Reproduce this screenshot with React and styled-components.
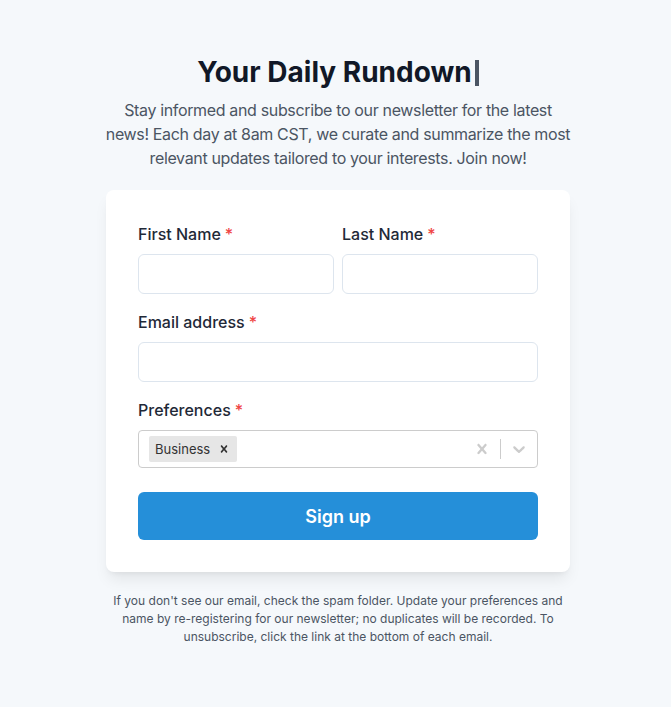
import React from "react";
import styled, { createGlobalStyle } from "styled-components";

const Global = createGlobalStyle`
  html, body { margin: 0; padding: 0; background: #f5f8fb; }
  body { font-family: Inter, "Noto Sans", sans-serif; -webkit-font-smoothing: antialiased; }
  * { box-sizing: border-box; }
`;

const Page = styled.div`
  min-height: 707px;
  display: flex;
  flex-direction: column;
  align-items: center;
  padding-top: 54px;
  padding-left: 5px;
`;

const Title = styled.h1`
  margin: 0;
  font-size: 28px;
  line-height: 36px;
  font-weight: 700;
  color: #111827;
  display: flex;
  align-items: center;
`;

const Cursor = styled.span`
  display: inline-block;
  width: 4px;
  height: 26px;
  margin-left: 3px;
  margin-top: 2px;
  background: #4b5563;
`;

const Lead = styled.p`
  margin: 8px 0 20px;
  width: 472px;
  text-align: center;
  font-size: 16px;
  line-height: 24px;
  letter-spacing: -0.35px;
  color: #4b5563;
`;

const Card = styled.form`
  width: 464px;
  background: #fff;
  border-radius: 8px;
  padding: 32px;
  box-shadow: 0 10px 15px -3px rgba(0,0,0,0.08), 0 4px 6px -4px rgba(0,0,0,0.08);
  display: flex;
  flex-direction: column;
  gap: 16px;
`;

const Row = styled.div`
  display: grid;
  grid-template-columns: 1fr 1fr;
  gap: 8px;
`;

const Field = styled.div`
  display: flex;
  flex-direction: column;
  gap: 8px;
`;

const Label = styled.label`
  font-size: 16px;
  line-height: 24px;
  font-weight: 500;
  color: #1f2937;
`;

const Req = styled.span`
  color: #ef4444;
  margin-left: 4px;
`;

const Input = styled.input`
  height: 40px;
  width: 100%;
  border: 1px solid #dde5ee;
  border-radius: 6px;
  padding: 0 12px;
  font: inherit;
  outline: none;
`;

const Select = styled.div`
  height: 38px;
  border: 1px solid #cccccc;
  border-radius: 4px;
  display: flex;
  align-items: center;
  padding-left: 8px;
`;

const Values = styled.div`
  flex: 1;
  display: flex;
  align-items: center;
  padding: 2px 2px;
`;

const Chip = styled.div`
  display: flex;
  align-items: center;
  background: #e6e6e6;
  border-radius: 2px;
  height: 26px;
`;

const ChipLabel = styled.span`
  font-size: 13px;
  color: #333;
  padding: 3px 3px 3px 6px;
`;

const ChipRemove = styled.span`
  display: flex;
  align-items: center;
  padding: 0 6px 0 4px;
  color: #333;
`;

const Indicators = styled.div`
  display: flex;
  align-items: center;
  align-self: stretch;
`;

const Indicator = styled.div`
  padding: 8px;
  display: flex;
  color: #cccccc;
`;

const Sep = styled.span`
  width: 1px;
  align-self: stretch;
  margin: 8px 0;
  background: #cccccc;
`;

const Button = styled.button`
  margin-top: 8px;
  height: 48px;
  border: 0;
  border-radius: 6px;
  background: #258fd9;
  color: #fff;
  font: inherit;
  font-size: 18px;
  font-weight: 600;
  cursor: pointer;
`;

const Foot = styled.p`
  margin: 20px 0 0;
  width: 452px;
  text-align: center;
  font-size: 12px;
  line-height: 18px;
  color: #4b5563;
`;

const Cross = ({ size = 20 }) => (
  <svg width={size} height={size} viewBox="0 0 20 20" fill="currentColor">
    <path d="M14.348 14.849c-0.469 0.469-1.229 0.469-1.697 0l-2.651-3.030-2.651 3.029c-0.469 0.469-1.229 0.469-1.697 0-0.469-0.469-0.469-1.229 0-1.697l2.758-3.15-2.759-3.152c-0.469-0.469-0.469-1.228 0-1.697s1.228-0.469 1.697 0l2.652 3.031 2.651-3.031c0.469-0.469 1.228-0.469 1.697 0s0.469 1.229 0 1.697l-2.758 3.152 2.758 3.15c0.469 0.469 0.469 1.229 0 1.698z" />
  </svg>
);

const Chevron = () => (
  <svg width="20" height="20" viewBox="0 0 20 20" fill="currentColor">
    <path d="M4.516 7.548c0.436-0.446 1.043-0.481 1.576 0l3.908 3.747 3.908-3.747c0.533-0.481 1.141-0.446 1.574 0 0.436 0.445 0.408 1.197 0 1.615-0.406 0.418-4.695 4.502-4.695 4.502-0.217 0.223-0.502 0.335-0.787 0.335s-0.57-0.112-0.789-0.335c0 0-4.287-4.084-4.695-4.502s-0.436-1.170 0-1.615z" />
  </svg>
);

export default function App() {
  return (
    <>
      <Global />
      <Page>
        <Title>
          Your Daily Rundown<Cursor />
        </Title>
        <Lead>
          Stay informed and subscribe to our newsletter for the latest news! Each day at 8am CST, we curate and summarize the most relevant updates tailored to your interests. Join now!
        </Lead>
        <Card onSubmit={(e) => e.preventDefault()}>
          <Row>
            <Field>
              <Label>First Name<Req>*</Req></Label>
              <Input />
            </Field>
            <Field>
              <Label>Last Name<Req>*</Req></Label>
              <Input />
            </Field>
          </Row>
          <Field>
            <Label>Email address<Req>*</Req></Label>
            <Input type="email" />
          </Field>
          <Field>
            <Label>Preferences<Req>*</Req></Label>
            <Select>
              <Values>
                <Chip>
                  <ChipLabel>Business</ChipLabel>
                  <ChipRemove><Cross size={14} /></ChipRemove>
                </Chip>
              </Values>
              <Indicators>
                <Indicator><Cross /></Indicator>
                <Sep />
                <Indicator><Chevron /></Indicator>
              </Indicators>
            </Select>
          </Field>
          <Button type="submit">Sign up</Button>
        </Card>
        <Foot>
          If you don't see our email, check the spam folder. Update your preferences and name by re-registering for our newsletter; no duplicates will be recorded. To unsubscribe, click the link at the bottom of each email.
        </Foot>
      </Page>
    </>
  );
}
